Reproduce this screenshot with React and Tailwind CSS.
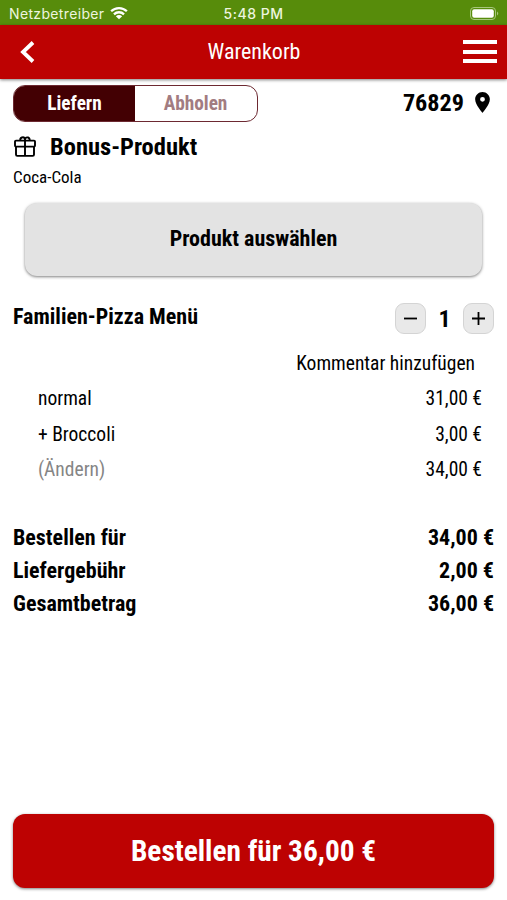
import React from 'react';

const positions = [
  { label: 'normal', price: '31,00 €' },
  { label: '+ Broccoli', price: '3,00 €' },
  { label: '(Ändern)', price: '34,00 €', muted: true },
];

const totals = [
  { label: 'Bestellen für', price: '34,00 €' },
  { label: 'Liefergebühr', price: '2,00 €' },
  { label: 'Gesamtbetrag', price: '36,00 €' },
];

const StatusBar = () => (
  <div className="grid h-[25px] grid-cols-3 items-center bg-[#578c0b] pl-[9px] pr-[7px] pt-[3px] font-['Inter',sans-serif] text-[14px] leading-none text-[#edf5df]">
    <div className="flex items-center gap-[6px] whitespace-nowrap">
      <span className="tracking-[0.35px]">Netzbetreiber</span>
      <svg className="h-[14px] w-[18px] -translate-y-px" viewBox="0 0 19 14" fill="none" stroke="white" strokeWidth="2.4">
        <path d="M1.2 5.2a11.7 11.7 0 0 1 16.6 0M4.2 8.4a7.5 7.5 0 0 1 10.6 0" />
        <path d="M6.2 10.4a4.7 4.7 0 0 1 6.6 0L9.5 13.6Z" fill="white" stroke="none" />
      </svg>
    </div>
    <span className="pr-[2px] text-center font-medium tracking-[0.5px]">5:48 PM</span>
    <svg className="h-[15px] w-[31px] -translate-y-px justify-self-end" viewBox="0 0 31 15">
      <rect x="1.5" y="1.5" width="25" height="12" rx="3.5" fill="none" stroke="#a7c67c" />
      <rect x="3.2" y="3.2" width="21.6" height="8.6" rx="2" fill="white" />
      <path d="M28 5.5v4q2.5-2 0-4" fill="#a7c67c" />
    </svg>
  </div>
);

const Header = () => (
  <header className="flex h-[54px] items-center justify-between bg-[#bd0202] pl-5 pr-[10px] text-white shadow-[0_1px_3px_rgba(0,0,0,0.5)]">
    <svg className="h-[22px] w-[25px]" viewBox="0 0 25 22" fill="none" stroke="white" strokeWidth="3.8">
      <path d="M13 1.5L3 11l10 9.5" />
    </svg>
    <h1 className="pb-[2px] text-[22px]">Warenkorb</h1>
    <div className="flex w-[34px] flex-col gap-[5.5px] pb-px">
      <div className="h-1 bg-white" />
      <div className="h-1 bg-white" />
      <div className="h-1 bg-white" />
    </div>
  </header>
);

const GiftIcon = () => (
  <svg className="mb-[3px] h-6 w-6" viewBox="0 0 24 24" fill="none" stroke="black" strokeWidth="1.9" strokeLinejoin="round">
    <rect x="2" y="6.6" width="20" height="6" rx="1" />
    <path d="M3 12.6v8a1.300 1.300 0 0 0 1.300 1.300h15.400a1.300 1.300 0 0 0 1.300-1.300v-8M12 5v17" />
    <path d="M7.500 6.600a2.300 2.300 0 1 1 4.500-1.700 2.300 2.300 0 1 1 4.500 1.700" />
  </svg>
);

const StepButton = ({ d }) => (
  <button className="flex h-[31px] w-[31px] items-center justify-center rounded-[9px] border border-[#d4d4d4] bg-[#e9e9e9]">
    <svg className="h-[15px] w-[15px]" viewBox="0 0 15 15" stroke="black" strokeWidth="1.8">
      <path d={d} />
    </svg>
  </button>
);

const App = () => {
  return (
    <div className="flex h-[900px] w-[507px] flex-col bg-white font-['Roboto_Condensed','Roboto',sans-serif] text-black font-stretch-condensed">
      <StatusBar />
      <Header />
      <main className="flex flex-1 flex-col px-[13px] pb-[12px]">
        <div className="mt-[6px] flex h-[37px] items-center justify-between">
          <div className="flex h-[37px] w-[245px] overflow-hidden rounded-[12px] border border-[#6d2931] text-[19.3px] font-bold">
            <button className="w-[121px] bg-[#430003] pt-[2px] text-white">Liefern</button>
            <button className="flex-1 pr-[1px] pt-[2px] text-[#a27c81]">Abholen</button>
          </div>
          <div className="flex items-center gap-[11px] pr-1 text-[24.2px] font-bold">
            <span>76829</span>
            <svg className="mb-[2px] h-[21px] w-[15px]" viewBox="5 2 14 20">
              <path fillRule="evenodd" d="M12 2C8.1 2 5 5.1 5 9c0 5.2 7 13 7 13s7-7.8 7-13c0-3.9-3.1-7-7-7zm0 9.3A2.3 2.3 0 1 1 12 6.700a2.300 2.300 0 0 1 0 4.600z" />
            </svg>
          </div>
        </div>
        <div className="mt-[9px] flex h-8 items-center gap-[13px]">
          <GiftIcon />
          <h2 className="text-[24.5px] font-bold">Bonus-Produkt</h2>
        </div>
        <p className="mt-[2px] text-[17px] leading-6">Coca-Cola</p>
        <button className="mx-3 mt-[14px] h-[73px] shrink-0 rounded-[12px] bg-[#e3e3e3] pb-[2px] text-[22px] font-bold shadow-[0_1px_3px_rgba(0,0,0,0.5)]">
          Produkt auswählen
        </button>
        <div className="mt-[27px] flex h-[31px] items-center justify-between">
          <h3 className="pb-1 text-[22px] font-bold">Familien-Pizza Menü</h3>
          <div className="flex items-center">
            <StepButton d="M1 7.5h13" />
            <span className="w-[37px] text-center text-[24px] font-bold">1</span>
            <StepButton d="M1 7.5h13M7.5 1v13" />
          </div>
        </div>
        <div className="mt-[12px] flex h-[35px] items-center justify-end pr-[19px] text-[19.5px]">Kommentar hinzufügen</div>
        {positions.map((p) => (
          <div key={p.label} className="flex h-[35.5px] items-center justify-between pl-[25px] pr-3 text-[19.5px]">
            <span className={p.muted ? 'text-[#858585]' : ''}>{p.label}</span>
            <span>{p.price}</span>
          </div>
        ))}
        <div className="mt-[33px]">
          {totals.map((t) => (
            <div key={t.label} className="flex h-[33px] items-center justify-between text-[22px] font-bold">
              <span>{t.label}</span>
              <span>{t.price}</span>
            </div>
          ))}
        </div>
        <button className="mt-auto h-[74px] rounded-[12px] bg-[#bd0202] pt-[2px] text-[29.3px] font-bold text-white shadow-[0_1px_3px_rgba(0,0,0,0.5)]">
          Bestellen für 36,00 €
        </button>
      </main>
    </div>
  );
};

export default App;
